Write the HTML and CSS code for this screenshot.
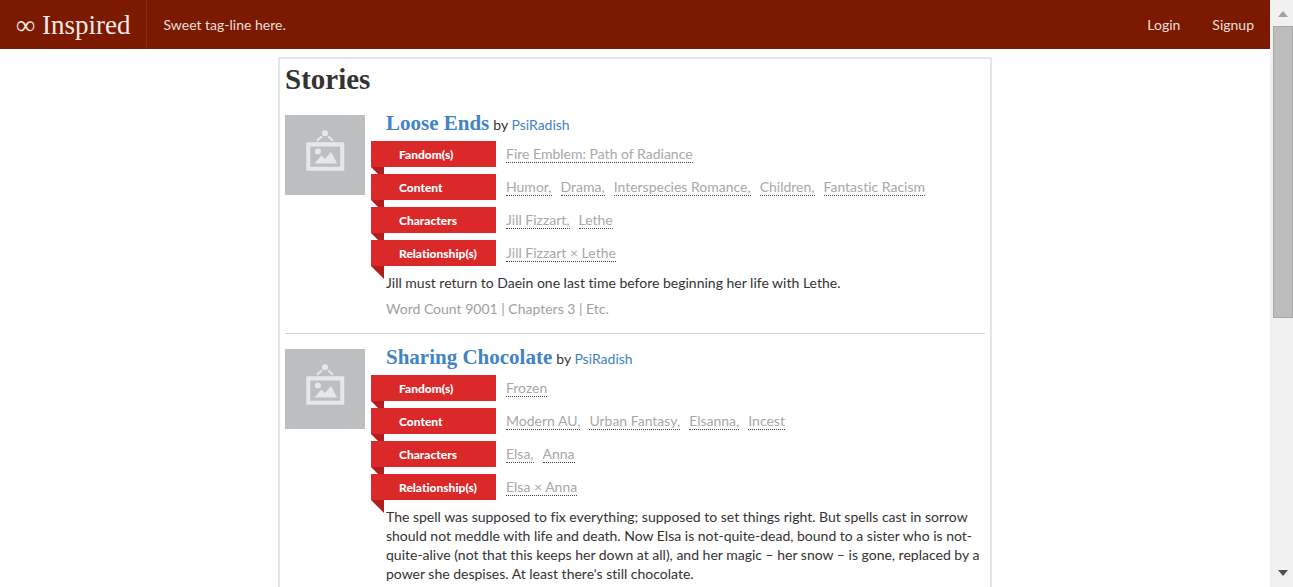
FILE: index.html
```html
<!DOCTYPE html>
<html lang="en">
<head>
<meta charset="utf-8">
<title>Inspired</title>
<link rel="stylesheet" href="styles.css">
</head>
<body>
<svg class="sprite" aria-hidden="true">
  <symbol id="placeholder" viewBox="0 0 79 79">
    <rect width="79" height="79" fill="#bcbec0"/>
    <circle cx="39.500" cy="18" r="3" fill="#e6e7e8"/>
    <path d="M36.500 21 31.500 25.500M42.500 21 47.500 25.500" stroke="#e6e7e8" stroke-width="2" fill="none"/>
    <path fill="#e6e7e8" fill-rule="evenodd" d="M21 27h37.500v28H21zM25 31v20h29.500V31z"/>
    <circle cx="32.500" cy="36" r="3" fill="#e6e7e8"/>
    <path d="M29 48 36 40 39.500 43.500 45.500 36.500 51.500 48z" fill="#e6e7e8"/>
  </symbol>
</svg>
<div class="page">
  <nav class="navbar">
    <a class="brand" href="#">∞ Inspired</a>
    <span class="tagline">Sweet tag-line here.</span>
    <a class="nav-link" href="#">Login</a>
    <a class="nav-link" href="#">Signup</a>
  </nav>
  <main class="card">
    <h1 class="card-title">Stories</h1>
    <article class="story">
      <svg class="thumb" role="img" aria-label="No image"><use href="#placeholder"/></svg>
      <div class="story-body">
        <header class="story-head">
          <h2 class="story-title"><a href="#">Loose Ends</a></h2>
          <span>by <a href="#">PsiRadish</a></span>
        </header>
        <dl class="facts">
          <div class="fact"><dt>Fandom(s)</dt><dd><a href="#">Fire Emblem: Path of Radiance</a></dd></div>
          <div class="fact"><dt>Content</dt><dd><a href="#">Humor,</a><a href="#">Drama,</a><a href="#">Interspecies Romance,</a><a href="#">Children,</a><a href="#">Fantastic Racism</a></dd></div>
          <div class="fact"><dt>Characters</dt><dd><a href="#">Jill Fizzart,</a><a href="#">Lethe</a></dd></div>
          <div class="fact"><dt>Relationship(s)</dt><dd><a href="#">Jill Fizzart × Lethe</a></dd></div>
        </dl>
        <p class="summary">Jill must return to Daein one last time before beginning her life with Lethe.</p>
        <p class="meta">Word Count 9001 | Chapters 3 | Etc.</p>
      </div>
    </article>
    <article class="story">
      <svg class="thumb" role="img" aria-label="No image"><use href="#placeholder"/></svg>
      <div class="story-body">
        <header class="story-head">
          <h2 class="story-title"><a href="#">Sharing Chocolate</a></h2>
          <span>by <a href="#">PsiRadish</a></span>
        </header>
        <dl class="facts">
          <div class="fact"><dt>Fandom(s)</dt><dd><a href="#">Frozen</a></dd></div>
          <div class="fact"><dt>Content</dt><dd><a href="#">Modern AU,</a><a href="#">Urban Fantasy,</a><a href="#">Elsanna,</a><a href="#">Incest</a></dd></div>
          <div class="fact"><dt>Characters</dt><dd><a href="#">Elsa,</a><a href="#">Anna</a></dd></div>
          <div class="fact"><dt>Relationship(s)</dt><dd><a href="#">Elsa × Anna</a></dd></div>
        </dl>
        <p class="summary">The spell was supposed to fix everything; supposed to set things right. But spells cast in sorrow should not meddle with life and death. Now Elsa is not-quite-dead, bound to a sister who is not-quite-alive (not that this keeps her down at all), and her magic – her snow – is gone, replaced by a power she despises. At least there's still chocolate.</p>
      </div>
    </article>
  </main>
</div>
<div class="scrollbar" aria-hidden="true">
  <svg class="arrow arrow-up" viewBox="0 0 10 6"><path d="M0 6 5 0 10 6z"/></svg>
  <div class="track"><div class="thumb-bar"></div></div>
  <svg class="arrow arrow-down" viewBox="0 0 10 6"><path d="M0 0h10L5 6z"/></svg>
</div>
</body>
</html>
```
FILE: styles.css
```css
* { box-sizing: border-box; }

body {
  margin: 0;
  height: 100vh;
  display: flex;
  overflow: hidden;
  background: #fff;
  color: #333;
  font: 14px/19px Lato, "Liberation Sans", sans-serif;
  font-variant-ligatures: none;
}

a { color: #4183c4; text-decoration: none; }
h1, h2, p, dl, dd { margin: 0; }
.sprite { display: none; }

.page { flex: 1; min-width: 0; overflow: hidden; }

.navbar {
  display: flex;
  align-items: stretch;
  height: 49px;
  background: #7b1a00;
  color: #eedfdb;
  line-height: 50px;
}
.brand {
  padding: 0 16px;
  border-right: 1px solid #8a2f17;
  color: #f3e8e5;
  font-family: Georgia, "Liberation Serif", serif;
  font-size: 27px;
}
.tagline { padding: 0 16px; margin-right: auto; }
.nav-link { padding: 0 16px; color: #eedfdb; }

.card {
  max-width: 714px;
  margin: 8px auto 0;
  padding: 0 5px;
  border: 2px solid #e5e6e6;
}
.card-title, .story-title { font-family: Georgia, "Liberation Serif", serif; }
.card-title {
  margin-bottom: 16px;
  font-size: 29px;
  line-height: 40px;
}

.story { display: flex; gap: 21px; padding-bottom: 15px; }
.story + .story { padding-top: 15px; border-top: 1px solid #d4d4d5; }
.thumb { flex: none; width: 80px; height: 80px; }
.story-body { flex: 1; min-width: 0; }
.story-head { display: flex; align-items: baseline; gap: 4px; height: 26px; }
.story-title { font-size: 21px; line-height: 16px; }

.facts { display: grid; gap: 7px; margin: 0 0 7px -15px; }
.fact { display: flex; gap: 10px; height: 26px; }
.fact dt {
  position: relative;
  width: 125px;
  padding-left: 28px;
  background: #db2828;
  color: #fff;
  font-size: 12px;
  font-weight: 900;
  line-height: 27px;
}
.fact dt::after {
  content: "";
  position: absolute;
  top: 100%;
  left: 0;
  width: 13px;
  height: 13px;
  background: #b21e1e;
  clip-path: polygon(0 0, 100% 0, 100% 100%);
}
.fact dd { display: flex; align-items: center; gap: 9px; }
.fact dd a { color: #a8a8a8; line-height: 17px; border-bottom: 1px dotted #444; }

.meta { margin-top: 7px; color: #a0a0a0; }

.scrollbar {
  display: flex;
  flex-direction: column;
  align-items: center;
  width: 23px;
  padding: 11px 0 11px 3px;
  background: #f1f1f1;
}
.arrow { width: 10px; height: 6px; }
.arrow-up { fill: #a3a3a3; }
.arrow-down { fill: #505050; }
.track { flex: 1; align-self: stretch; padding: 9px 0; }
.thumb-bar { height: 54.5%; background: #bcbcbc; border: 1px solid #a8a8a8; }
```
